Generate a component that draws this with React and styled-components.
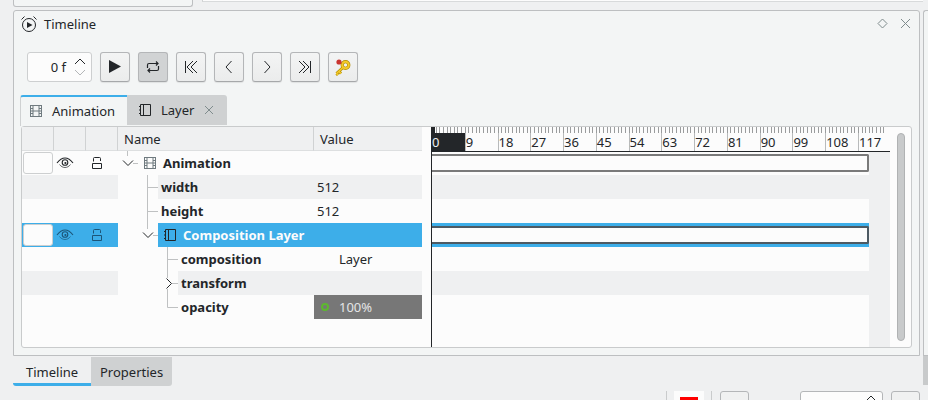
import styled, { createGlobalStyle } from 'styled-components';

const GlobalStyle = createGlobalStyle`
  html, body {
    margin: 0;
    padding: 0;
    background: #eff0f1;
  }
  * {
    box-sizing: border-box;
  }
`;

const FRAME_STEP = 32.77;
const RULER_LABELS = [0, 9, 18, 27, 36, 45, 54, 63, 72, 81, 90, 99, 108, 117];

const BRANCHES = {
  root: { w: 20, lines: 'M9.5 0V5M15 12.5H20', arrow: 'M5 9.5L10 14.5L15 9.5' },
  child: { w: 40, lines: 'M29.5 0V24M29.5 12.5H40' },
  group: { w: 40, lines: 'M29.5 0V6M35 12.5H40', arrow: 'M25 9.5L30 14.5L35 9.5' },
  leaf: { w: 60, lines: 'M49.5 0V24M49.5 12.5H60' },
  closed: { w: 60, lines: 'M49.5 0V7M49.5 18V24M54 12.5H60', arrow: 'M48.5 7.5L53.5 12.5L48.5 17.5' },
  last: { w: 60, lines: 'M49.5 0V12.5H60' },
};

const ROWS = [
  { name: 'Animation', branch: 'root', icon: 'film', controls: true },
  { name: 'width', branch: 'child', value: '512', alt: true },
  { name: 'height', branch: 'child', value: '512' },
  { name: 'Composition Layer', branch: 'group', icon: 'layer', controls: true, selected: true },
  { name: 'composition', branch: 'leaf', value: 'Layer', inset: true },
  { name: 'transform', branch: 'closed', alt: true },
  { name: 'opacity', branch: 'last', value: '100%', inset: true, animated: true },
];

const Page = styled.div`
  width: 928px;
  height: 400px;
  overflow: hidden;
  display: flex;
  background: #eff0f1;
  color: #232629;
  font-family: 'Noto Sans', sans-serif;
  font-size: 13px;
`;

const MainColumn = styled.div`
  width: 923px;
  flex-shrink: 0;
  padding-left: 13px;
`;

const SideColumn = styled.div`
  flex: 1;
  padding-top: 10px;
`;

const SidePanel = styled.div`
  height: 346px;
  background: #f3f5f5;
  border-top: 1px solid #bdbfc1;
  border-left: 1px solid #bdbfc1;
  border-bottom: 1px solid #bdbfc1;
  border-top-left-radius: 3px;
`;

const SideThumb = styled.div`
  height: 29px;
  background: #c8cacb;
`;

const TopStrip = styled.div`
  height: 10px;
  display: flex;
  align-items: flex-start;
`;

const TopLeftPanel = styled.div`
  width: 180px;
  height: 7px;
  background: #f3f5f5;
  border: 1px solid #bdbfc1;
  border-top: none;
  border-radius: 0 0 3px 3px;
`;

const TopRightPanel = styled.div`
  flex: 1;
  height: 2px;
  margin-left: 9px;
  background: #fcfcfc;
  border-left: 1px solid #cfd1d2;
  border-bottom: 1px solid #d8dadb;
`;

const Dock = styled.section`
  width: 907px;
  height: 346px;
  background: #f3f5f5;
  border: 1px solid #bdbfc1;
  border-radius: 3px 3px 0 0;
`;

const TitleBar = styled.header`
  height: 27px;
  display: flex;
  align-items: center;
  padding: 0 7px 2px;
  gap: 7px;
`;

const TitleText = styled.span`
  flex: 1;
`;

const TitleAction = styled.svg`
  width: 13px;
  height: 13px;
  fill: none;
  stroke: #7f8c8d;
  stroke-width: 1;
  margin-left: 3px;
`;

const Toolbar = styled.div`
  display: flex;
  gap: 8px;
  margin: 14px 0 13px 13px;
`;

const FrameSpin = styled.div`
  width: 65px;
  height: 30px;
  display: flex;
  align-items: center;
  justify-content: flex-end;
  gap: 6px;
  padding-right: 3px;
  background: #fcfcfc;
  border: 1px solid #cdcfd0;
  border-radius: 3px;
`;

const SpinArrows = styled.svg`
  width: 16px;
  height: 24px;
  fill: none;
  stroke-width: 1;
`;

const ToolButton = styled.button`
  width: 30px;
  height: 30px;
  padding: 0;
  display: flex;
  align-items: center;
  justify-content: center;
  background: ${(p) => (p.$checked ? '#d1d3d4' : 'linear-gradient(#f3f4f4, #ebecec)')};
  border: 1px solid #b4b6b8;
  border-bottom-color: #a6a8aa;
  border-radius: 3px;
  box-shadow: 0 1px 1px rgba(0, 0, 0, 0.08);
`;

const ToolIcon = styled.svg`
  width: 22px;
  height: 22px;
  fill: none;
  stroke: #232629;
  stroke-width: 1;
`;

const TabBar = styled.div`
  display: flex;
  margin-left: 6px;
  height: 31px;
`;

const Tab = styled.div`
  height: ${(p) => (p.$active ? '31px' : '30px')};
  width: ${(p) => p.$width}px;
  display: flex;
  align-items: center;
  padding-bottom: 1px;
  padding-left: ${(p) => (p.$active ? 8 : 11)}px;
  gap: 9px;
  background: ${(p) => (p.$active ? '#f3f5f5' : '#cfd1d2')};
  border-top: ${(p) => (p.$active ? '2px solid #3daee9' : 'none')};
  border-left: ${(p) => (p.$active ? '1px solid #cfd1d2' : 'none')};
  border-radius: ${(p) => (p.$active ? '3px 0 0 0' : '0 3px 0 0')};
`;

const TabClose = styled.svg`
  width: 10px;
  height: 10px;
  margin-left: 1px;
  fill: none;
  stroke: #7f8c8d;
  stroke-width: 1;
`;

const Frame = styled.div`
  width: 891px;
  height: 222px;
  margin-left: 7px;
  display: flex;
  background: #fcfcfc;
  border: 1px solid #c9cbcc;
  border-radius: 3px;
`;

const TreePane = styled.div`
  width: 400px;
  flex-shrink: 0;
`;

const PaneDivider = styled.div`
  width: 1px;
  margin-left: 9px;
  background: #232629;
`;

const TreeHeader = styled.div`
  height: 24px;
  display: flex;
  background: #eff0f1;
`;

const HeaderCell = styled.div`
  width: ${(p) => p.$width}px;
  flex: ${(p) => (p.$width ? 'none' : 1)};
  display: flex;
  align-items: center;
  padding-left: ${(p) => p.$pad || 0}px;
  border-right: ${(p) => (p.$last ? 'none' : '1px solid #d0d2d3')};
  border-bottom: 1px solid #dddfe0;
`;

const TreeRow = styled.div`
  height: 24px;
  display: flex;
  background: ${(p) => (p.$selected ? 'transparent' : '#fcfcfc')};
`;

const SideCells = styled.div`
  width: 96px;
  flex-shrink: 0;
  display: flex;
  align-items: center;
  background: ${(p) => (p.$selected ? '#3daee9' : p.$alt ? '#eff0f1' : 'transparent')};
`;

const SwatchSlot = styled.div`
  width: 32px;
  display: flex;
  align-items: center;
  padding-left: 1px;
`;

const ToggleSlot = styled.div`
  width: 32px;
  display: flex;
  align-items: center;
  justify-content: center;
  padding-right: 10px;
`;

const ColorSwatch = styled.div`
  width: 30px;
  height: 22px;
  background: #fcfcfc;
  border: 1px solid #cdcfd0;
  border-radius: 3px;
`;

const Branch = styled.svg`
  flex-shrink: 0;
  height: 24px;
  fill: none;
  stroke-width: 1;
`;

const NameValue = styled.div`
  flex: 1;
  display: flex;
  align-items: center;
  background: ${(p) => (p.$selected ? '#3daee9' : p.$alt ? '#eff0f1' : 'transparent')};
`;

const NameCell = styled.div`
  flex: 1;
  display: flex;
  align-items: center;
  gap: 6px;
  padding-left: ${(p) => (p.$hasIcon ? 5 : 3)}px;
  font-weight: 700;
  color: ${(p) => (p.$selected ? '#fcfcfc' : '#232629')};
  white-space: nowrap;
`;

const ValueCell = styled.div`
  width: 108px;
  height: 24px;
  flex-shrink: 0;
  display: flex;
  align-items: center;
  gap: 10px;
  padding-left: ${(p) => (p.$animated ? 7 : p.$inset ? 25 : 3)}px;
  background: ${(p) => (p.$animated ? '#777777' : 'transparent')};
  color: ${(p) => (p.$animated ? '#e4e5e6' : '#232629')};
`;

const KeyDot = styled.span`
  width: 8px;
  height: 8px;
  border-radius: 50%;
  border: 2px solid #5cb82e;
`;

const TimelinePane = styled.div`
  width: 458px;
  flex-shrink: 0;
  display: flex;
  flex-direction: column;
`;

const Ruler = styled.div`
  height: 24px;
  position: relative;
  z-index: 1;
  box-shadow: 0 1px 0 #232629;
  background: #fcfcfc;
`;

const RulerTicks = styled.div`
  width: 455px;
  height: 6px;
  background: repeating-linear-gradient(to right, #9a9c9d 0 1px, transparent 1px 3.64px);
`;

const Playhead = styled.div`
  width: 3px;
  height: 6px;
  background: #232629;
`;

const RulerLabels = styled.div`
  height: 18px;
  display: flex;
`;

const RulerLabel = styled.div`
  width: ${FRAME_STEP}px;
  flex-shrink: 0;
  line-height: 19px;
  background: ${(p) => (p.$current ? '#232629' : 'transparent')};
  color: ${(p) => (p.$current ? '#eff0f1' : '#232629')};
  border-left: ${(p) => (p.$current ? 'none' : '1px solid #b8babb')};
`;

const TrackArea = styled.div`
  flex: 1;
  display: flex;
  background: #eff0f1;
`;

const Tracks = styled.div`
  width: 437px;
  flex-shrink: 0;
  background: #fcfcfc;
`;

const TrackRow = styled.div`
  height: 24px;
  display: flex;
  align-items: center;
  background: ${(p) => (p.$selected ? '#3daee9' : p.$alt ? '#eff0f1' : '#fcfcfc')};
`;

const TrackBar = styled.div`
  width: 100%;
  height: 18px;
  background: #fcfcfc;
  border: 2px solid ${(p) => (p.$selected ? '#4d5a63' : '#7a7a7a')};
  border-left: none;
  border-radius: 0 2px 2px 0;
`;

const ScrollZone = styled.div`
  flex: 1;
  padding: 6px 0 6px 7px;
`;

const ScrollThumb = styled.div`
  width: 8px;
  height: 208px;
  background: #c8cacb;
  border: 1px solid #b0b2b3;
  border-radius: 4px;
`;

const BottomTabs = styled.div`
  display: flex;
  height: 29px;
  margin-top: 1px;
`;

const BottomTab = styled.div`
  width: ${(p) => p.$width}px;
  display: flex;
  align-items: center;
  padding-left: ${(p) => p.$pad}px;
  padding-top: ${(p) => (p.$active ? 3 : 1)}px;
  background: ${(p) => (p.$active ? '#eff0f1' : '#cfd1d2')};
  border-bottom: ${(p) => (p.$active ? '3px solid #3daee9' : 'none')};
  border-radius: ${(p) => (p.$active ? '0 0 0 3px' : '0 0 3px 0')};
`;

const Footer = styled.footer`
  display: flex;
  margin-top: 5px;
  margin-left: 653px;
  height: 30px;
`;

const FooterSeparator = styled.div`
  width: 1px;
  height: 30px;
  background: #c9cbcc;
  margin-right: ${(p) => p.$right}px;
`;

const ColorBox = styled.div`
  width: 30px;
  height: 30px;
  margin-right: 7px;
  padding: 6px 6px 0;
  background: #fcfcfc;
`;

const ColorFill = styled.div`
  height: 18px;
  background: #ff0000;
`;

const FooterButton = styled.div`
  width: ${(p) => p.$width}px;
  height: 30px;
  margin-right: ${(p) => p.$right}px;
  display: flex;
  justify-content: flex-end;
  padding: 3px 6px 0 0;
  background: ${(p) => (p.$field ? '#fcfcfc' : '#f0f1f1')};
  border: 1px solid #b4b6b8;
  border-radius: 3px;
`;

const FooterArrow = styled.svg`
  width: 10px;
  height: 6px;
  fill: none;
  stroke: #232629;
  stroke-width: 1;
`;

const FilmIcon = () => (
  <svg width="14" height="14" viewBox="0 0 14 14" style={{ flexShrink: 0 }}>
    <path
      fill="#6f7a7f"
      fillRule="evenodd"
      d="M1 1H13V13H1ZM2 2V4H3.5V2ZM4.5 2V6.5H9.5V2ZM10.5 2V4H12V2ZM2 5V6.5H3.5V5ZM10.5 5V6.5H12V5ZM2 7.5V9H3.5V7.5ZM4.5 7.5V12H9.5V7.5ZM10.5 7.5V9H12V7.5ZM2 10V12H3.5V10ZM10.5 10V12H12V10Z"
    />
  </svg>
);

const LayerIcon = () => (
  <svg width="14" height="14" viewBox="0 0 14 14" fill="none" stroke="#232629" style={{ flexShrink: 0 }}>
    <path d="M2.5 1.5H12.5V12.5H2.5ZM5.5 1.5V12.5M1 3.5H2.5M1 7H2.5M1 10.5H2.5" />
  </svg>
);

const EyeIcon = ({ color }) => (
  <svg width="18" height="14" viewBox="0 0 18 14" fill="none" stroke={color}>
    <path d="M1 7C4 3 7 2 9 2C11 2 14 3 17 7" strokeWidth="1.1" />
    <path d="M3.5 8.5C5 10.5 7 11.5 9 11.5C11 11.5 13 10.5 14.5 8.5" strokeWidth="0.7" />
    <circle cx="9" cy="6.5" r="2.8" strokeWidth="1.1" />
    <circle cx="9.4" cy="7" r="1.1" fill={color} stroke="none" />
  </svg>
);

const LockIcon = ({ color }) => (
  <svg width="12" height="14" viewBox="0 0 12 14" fill="none" stroke={color}>
    <path d="M2.5 5.5V2.5Q2.5 1.5 3.5 1.5H8.5Q9.5 1.5 9.5 2.5V5" />
    <path d="M1.5 7.5H10.5V12.5H1.5Z" />
  </svg>
);

const ClockIcon = () => (
  <svg width="16" height="18" viewBox="0 0 16 18" fill="none" stroke="#232629" style={{ flexShrink: 0 }}>
    <circle cx="8" cy="10" r="6.5" />
    <path d="M6 7V13L11.5 10Z" fill="#232629" stroke="none" />
    <path d="M0.5 4.5L3.5 1.5M12.5 1.5L15.5 4.5" />
  </svg>
);

const Branches = ({ kind }) => {
  const branch = BRANCHES[kind];
  return (
    <Branch width={branch.w} viewBox={`0 0 ${branch.w} 24`}>
      <path d={branch.lines} stroke="#bfc1c2" />
      {branch.arrow && <path d={branch.arrow} stroke="#232629" />}
    </Branch>
  );
};

const Row = ({ row }) => {
  const toggleColor = row.selected ? '#1c5578' : '#232629';
  return (
    <TreeRow $selected={row.selected}>
      <SideCells $alt={row.alt} $selected={row.selected}>
        {row.controls && (
          <>
            <SwatchSlot>
              <ColorSwatch />
            </SwatchSlot>
            <ToggleSlot>
              <EyeIcon color={toggleColor} />
            </ToggleSlot>
            <ToggleSlot>
              <LockIcon color={toggleColor} />
            </ToggleSlot>
          </>
        )}
      </SideCells>
      <Branches kind={row.branch} />
      <NameValue $alt={row.alt} $selected={row.selected}>
        <NameCell $hasIcon={!!row.icon} $selected={row.selected}>
          {row.icon === 'film' && <FilmIcon />}
          {row.icon === 'layer' && <LayerIcon />}
          {row.name}
        </NameCell>
        {row.value && (
          <ValueCell $inset={row.inset} $animated={row.animated}>
            {row.animated && <KeyDot />}
            {row.value}
          </ValueCell>
        )}
      </NameValue>
    </TreeRow>
  );
};

const App = () => (
  <Page>
    <GlobalStyle />
    <MainColumn>
      <TopStrip>
        <TopLeftPanel />
        <TopRightPanel />
      </TopStrip>
      <Dock>
        <TitleBar>
          <ClockIcon />
          <TitleText>Timeline</TitleText>
          <TitleAction viewBox="0 0 13 13">
            <path d="M6.5 2L11 6.5L6.5 11L2 6.5Z" />
          </TitleAction>
          <TitleAction viewBox="0 0 13 13">
            <path d="M2 2L11 11M11 2L2 11" />
          </TitleAction>
        </TitleBar>
        <Toolbar>
          <FrameSpin>
            <span>0 f</span>
            <SpinArrows viewBox="0 0 16 24">
              <path d="M3 9L8 4L13 9" stroke="#232629" />
              <path d="M3 15L8 20L13 15" stroke="#b4b6b8" />
            </SpinArrows>
          </FrameSpin>
          <ToolButton>
            <ToolIcon viewBox="0 0 22 22">
              <path d="M5 4L17 10.5L5 17Z" fill="#232629" stroke="none" />
            </ToolIcon>
          </ToolButton>
          <ToolButton $checked>
            <ToolIcon viewBox="0 0 22 22">
              <path
                d="M5.5 12V9Q5.5 7.5 7 7.5H16M14 5.5L16 7.5L14 9.5M16.5 10V13Q16.5 14.5 15 14.5H6M8 12.5L6 14.5L8 16.5"
                strokeWidth="1.2"
              />
            </ToolIcon>
          </ToolButton>
          <ToolButton>
            <ToolIcon viewBox="0 0 22 22">
              <path d="M5.5 5V17M13 5L7 11L13 17M17 5L11 11L17 17" />
            </ToolIcon>
          </ToolButton>
          <ToolButton>
            <ToolIcon viewBox="0 0 22 22">
              <path d="M13.5 5L8 11L13.5 17" />
            </ToolIcon>
          </ToolButton>
          <ToolButton>
            <ToolIcon viewBox="0 0 22 22">
              <path d="M8.5 5L14 11L8.5 17" />
            </ToolIcon>
          </ToolButton>
          <ToolButton>
            <ToolIcon viewBox="0 0 22 22">
              <path d="M16.5 5V17M9 5L15 11L9 17M5 5L11 11L5 17" />
            </ToolIcon>
          </ToolButton>
          <ToolButton>
            <ToolIcon viewBox="0 0 22 22">
              <path d="M11 11.5L4.5 17.5M7 15.5L9 17.5M4.5 17.5L6 19" stroke="#b08d00" strokeWidth="3" />
              <circle cx="13.5" cy="9" r="3.3" stroke="#b08d00" strokeWidth="3.2" />
              <path d="M11 11.5L4.5 17.5M7 15.5L9 17.5M4.5 17.5L6 19" stroke="#f4c92a" strokeWidth="1.6" />
              <circle cx="13.5" cy="9" r="3.3" stroke="#f4c92a" strokeWidth="2" />
              <circle cx="7" cy="6" r="2.6" fill="#c9342f" stroke="none" />
            </ToolIcon>
          </ToolButton>
        </Toolbar>
        <TabBar>
          <Tab $active $width={107}>
            <FilmIcon />
            <span>Animation</span>
          </Tab>
          <Tab $width={100}>
            <LayerIcon />
            <span>Layer</span>
            <TabClose viewBox="0 0 10 10">
              <path d="M1 1L9 9M9 1L1 9" />
            </TabClose>
          </Tab>
        </TabBar>
        <Frame>
          <TreePane>
            <TreeHeader>
              <HeaderCell $width={32} />
              <HeaderCell $width={32} />
              <HeaderCell $width={32} />
              <HeaderCell $pad={6}>Name</HeaderCell>
              <HeaderCell $width={108} $pad={6} $last>
                Value
              </HeaderCell>
            </TreeHeader>
            {ROWS.map((row) => (
              <Row key={row.name} row={row} />
            ))}
          </TreePane>
          <PaneDivider />
          <TimelinePane>
            <Ruler>
              <RulerTicks>
                <Playhead />
              </RulerTicks>
              <RulerLabels>
                {RULER_LABELS.map((frame) => (
                  <RulerLabel key={frame} $current={frame === 0}>
                    {frame}
                  </RulerLabel>
                ))}
              </RulerLabels>
            </Ruler>
            <TrackArea>
              <Tracks>
                {ROWS.map((row) => (
                  <TrackRow key={row.name} $alt={row.alt} $selected={row.selected}>
                    {row.controls && <TrackBar $selected={row.selected} />}
                  </TrackRow>
                ))}
              </Tracks>
            </TrackArea>
          </TimelinePane>
          <ScrollZone>
            <ScrollThumb />
          </ScrollZone>
        </Frame>
      </Dock>
      <BottomTabs>
        <BottomTab $active $width={78} $pad={13}>
          Timeline
        </BottomTab>
        <BottomTab $width={81} $pad={9}>
          Properties
        </BottomTab>
      </BottomTabs>
      <Footer>
        <FooterSeparator $right={7} />
        <ColorBox>
          <ColorFill />
        </ColorBox>
        <FooterSeparator $right={8} />
        <FooterButton $width={29} $right={51} />
        <FooterButton $width={83} $right={8} $field>
          <FooterArrow viewBox="0 0 10 6">
            <path d="M1 5L5 1L9 5" />
          </FooterArrow>
        </FooterButton>
        <FooterButton $width={29} $right={0} />
      </Footer>
    </MainColumn>
    <SideColumn>
      <SidePanel />
      <SideThumb />
    </SideColumn>
  </Page>
);

export default App;
